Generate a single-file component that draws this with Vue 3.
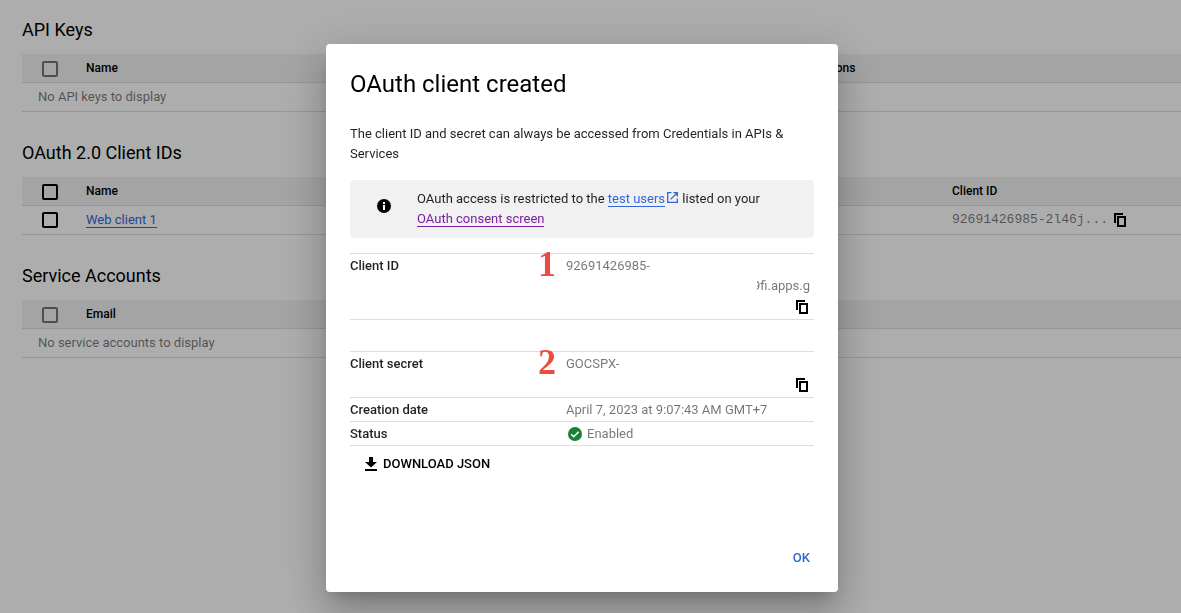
<script setup>
import { ref } from 'vue'

const open = ref(true)
</script>

<template>
  <div class="screen">
    <svg class="defs" width="0" height="0" aria-hidden="true">
      <symbol id="copy" viewBox="0 0 12 14">
        <path fill="currentColor" d="M0 0h9v2H2v8H0zM3 3h9v11H3zM5 5v7h5V5z" fill-rule="evenodd" />
      </symbol>
    </svg>

    <main class="page">
      <section>
        <h2>API Keys</h2>
        <table class="list">
          <thead>
            <tr>
              <th class="pick"><input type="checkbox" disabled aria-label="Select all API keys" /></th>
              <th>Name</th>
              <th class="restrictions">Restrictions</th>
            </tr>
          </thead>
          <tbody>
            <tr><td class="empty" colspan="3">No API keys to display</td></tr>
          </tbody>
        </table>
      </section>

      <section>
        <h2>OAuth 2.0 Client IDs</h2>
        <table class="list">
          <thead>
            <tr>
              <th class="pick"><input type="checkbox" aria-label="Select all clients" /></th>
              <th>Name</th>
              <th class="client">Client ID</th>
            </tr>
          </thead>
          <tbody>
            <tr>
              <td class="pick"><input type="checkbox" aria-label="Select Web client 1" /></td>
              <td><a class="link" href="#client">Web client 1</a></td>
              <td class="client">
                <div class="client-value">
                  <code>92691426985-2l46j...</code>
                  <button class="copy" type="button" aria-label="Copy client ID">
                    <svg width="12" height="14"><use href="#copy" /></svg>
                  </button>
                </div>
              </td>
            </tr>
          </tbody>
        </table>
      </section>

      <section>
        <h2>Service Accounts</h2>
        <table class="list">
          <thead>
            <tr>
              <th class="pick"><input type="checkbox" disabled aria-label="Select all service accounts" /></th>
              <th>Email</th>
            </tr>
          </thead>
          <tbody>
            <tr><td class="empty" colspan="2">No service accounts to display</td></tr>
          </tbody>
        </table>
      </section>
    </main>

    <div v-if="open" class="backdrop">
      <div class="dialog" role="dialog" aria-modal="true" aria-labelledby="dialog-title">
        <div class="body">
          <h1 id="dialog-title">OAuth client created</h1>
          <p class="intro">
            The client ID and secret can always be accessed from Credentials in APIs &amp; Services
          </p>

          <div class="notice">
            <svg class="info" width="14" height="14" viewBox="0 0 14 14" aria-hidden="true">
              <circle cx="7" cy="7" r="7" />
              <path fill="#fff" d="M6 3h2v2H6zM6 6h2v5H6z" />
            </svg>
            <p>
              OAuth access is restricted to the <a class="link" href="#users">test users</a>
              <svg class="external" width="11" height="11" viewBox="0 0 11 11" aria-hidden="true">
                <path fill="none" stroke="currentColor" stroke-width="1.3" d="M4.5.7H.7v9.6h9.6V6.5M6.5.7h3.8v3.8M10 1 3.6 7.4" />
              </svg>
              listed on your <a class="link visited" href="#consent">OAuth consent screen</a>
            </p>
          </div>

          <table class="details">
            <tbody>
              <tr>
                <th scope="row">Client ID</th>
                <td>
                  <div class="value">
                    <span class="step">1</span>
                    <span>92691426985-</span>
                    <span class="tail">9fi.apps.g</span>
                    <button class="copy" type="button" aria-label="Copy client ID">
                      <svg width="12" height="14"><use href="#copy" /></svg>
                    </button>
                  </div>
                </td>
              </tr>
            </tbody>
          </table>

          <table class="details secret">
            <tbody>
              <tr>
                <th scope="row">Client secret</th>
                <td>
                  <div class="value">
                    <span class="step">2</span>
                    <span>GOCSPX-</span>
                    <button class="copy" type="button" aria-label="Copy client secret">
                      <svg width="12" height="14"><use href="#copy" /></svg>
                    </button>
                  </div>
                </td>
              </tr>
              <tr>
                <th scope="row">Creation date</th>
                <td>April 7, 2023 at 9:07:43 AM GMT+7</td>
              </tr>
              <tr>
                <th scope="row">Status</th>
                <td>
                  <div class="status">
                    <svg width="14" height="14" viewBox="0 0 14 14" aria-hidden="true">
                      <circle cx="7" cy="7" r="7" fill="#188038" />
                      <path fill="none" stroke="#fff" stroke-width="1.6" d="m3.2 7.2 2.5 2.5 5-5" />
                    </svg>
                    Enabled
                  </div>
                </td>
              </tr>
            </tbody>
          </table>

          <button class="download" type="button">
            <svg width="12" height="14" viewBox="0 0 12 14" aria-hidden="true">
              <path d="M4 0h4v5h4L6 10.5 0 5h4zM0 12h12v2H0z" />
            </svg>
            DOWNLOAD JSON
          </button>
        </div>

        <div class="actions">
          <button class="ok" type="button" @click="open = false">OK</button>
        </div>
      </div>
    </div>
  </div>
</template>

<style>
body {
  margin: 0;
  background: #fff;
}
</style>

<style scoped>
.screen {
  min-height: 100vh;
  font: 400 13px/20px Roboto, "Liberation Sans", sans-serif;
  color: rgba(0, 0, 0, 0.87);
}
.defs {
  position: absolute;
}
h1,
h2,
p {
  margin: 0;
  font-weight: 400;
}
table {
  width: 100%;
  border-collapse: separate;
  border-spacing: 0;
}
th {
  font-weight: 500;
  text-align: left;
}
button {
  border: 0;
  background: none;
  font: inherit;
  color: inherit;
  cursor: pointer;
}

.page {
  display: flex;
  flex-direction: column;
  gap: 29px;
  padding: 18px 0 0 22px;
}
h2 {
  margin-bottom: 12px;
  font-size: 18px;
  line-height: 24px;
  color: #000;
}
.list {
  table-layout: fixed;
}
.list th,
.list td {
  height: 28px;
  padding: 0;
  border-bottom: 1px solid #dedede;
  color: rgba(0, 0, 0, 0.54);
}
.list th {
  background: #f2f2f2;
  font-size: 12px;
  color: #000;
}
.list .pick {
  width: 44px;
  padding-left: 20px;
  line-height: 0;
}
.list th.pick {
  height: 26px;
  padding-top: 2px;
}
.list .empty {
  padding-left: 16px;
}
.restrictions {
  width: 390px;
}
.client {
  width: 229px;
}
input {
  appearance: none;
  box-sizing: border-box;
  width: 16px;
  height: 16px;
  margin: 0;
  border: 2px solid #000;
  border-radius: 2px;
}
input:disabled {
  border-color: #757575;
}
.client-value {
  display: flex;
  align-items: center;
  gap: 6px;
}
code {
  font: 13px/20px "Liberation Mono", monospace;
}
.link {
  color: #3367d6;
  text-decoration: none;
  border-bottom: 1px solid;
}
.visited {
  color: #7b1fa2;
}
.copy {
  display: flex;
  padding: 0;
  color: #000;
}

.backdrop {
  position: fixed;
  inset: 0;
  display: flex;
  justify-content: center;
  align-items: flex-start;
  padding: 44px 17px 0 0;
  background: rgba(0, 0, 0, 0.32);
}
.dialog {
  width: 100%;
  max-width: 512px;
  border-radius: 4px;
  background: #fff;
  box-shadow:
    0 11px 15px -7px rgba(0, 0, 0, 0.2),
    0 24px 38px 3px rgba(0, 0, 0, 0.14),
    0 9px 46px 8px rgba(0, 0, 0, 0.12);
}
.body {
  padding: 24px 24px 58px;
}
h1 {
  margin-bottom: 24px;
  font-size: 24px;
  line-height: 32px;
  color: #000;
}
.intro {
  margin-bottom: 16px;
}
.notice {
  display: flex;
  gap: 26px;
  margin-bottom: 15px;
  padding: 9px 27px;
  border-radius: 4px;
  background: #f1f1f1;
}
.info {
  flex: none;
  margin-top: 10px;
}
.external {
  margin: 0 1px 0 2px;
  color: #3367d6;
}
.details {
  border-bottom: 1px solid #dedede;
}
.details th,
.details td {
  padding: 2px 0 1px;
  border-top: 1px solid #dedede;
  vertical-align: top;
}
.details th {
  width: 216px;
}
.details td {
  color: rgba(0, 0, 0, 0.54);
}
.secret {
  margin-top: 31px;
}
.value {
  position: relative;
  display: flex;
  flex-direction: column;
}
.value .copy {
  align-self: flex-end;
  margin: 4px 6px;
}
.tail {
  position: relative;
  align-self: flex-end;
  margin-right: 4px;
}
.tail::before {
  content: "";
  position: absolute;
  inset: 0 auto 0 0;
  width: 4px;
  background: #fff;
}
.step {
  position: absolute;
  top: -10px;
  left: -28px;
  font: 700 36px/36px "Liberation Serif", serif;
  color: #ea4b42;
}
.status {
  display: flex;
  align-items: center;
  gap: 5px;
  padding-left: 2px;
}
.download {
  display: flex;
  align-items: center;
  gap: 6px;
  height: 36px;
  padding: 0 15px;
  font-weight: 500;
  color: #000;
}
.actions {
  display: flex;
  justify-content: flex-end;
  padding: 0 16px 16px;
}
.ok {
  height: 36px;
  padding: 0 12px;
  font-weight: 500;
  color: #3367d6;
}
</style>
